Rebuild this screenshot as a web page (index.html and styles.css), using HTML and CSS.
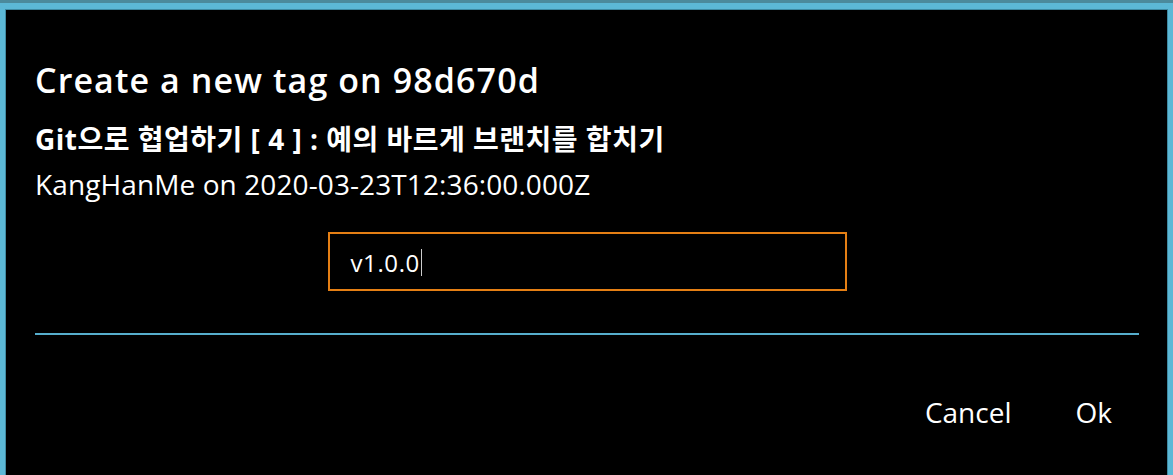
FILE: index.html
```html
<!DOCTYPE html>
<html lang="ko">
<head>
<meta charset="utf-8">
<title>Create a new tag</title>
<link rel="stylesheet" href="styles.css">
</head>
<body>
<div class="topbar"></div>
<div class="frame">
  <div class="dialog">
    <h1 class="title">Create a new tag on 98d670d</h1>
    <div class="commit-msg">Git으로 협업하기 [ 4 ] : 예의 바르게 브랜치를 합치기</div>
    <div class="commit-meta">KangHanMe on 2020-03-23T12:36:00.000Z</div>
    <div class="field-row">
      <div class="field"><span class="value">v1.0.0</span><span class="caret"></span></div>
    </div>
    <hr class="divider">
    <div class="actions">
      <button class="btn">Cancel</button>
      <button class="btn">Ok</button>
    </div>
  </div>
</div>
</body>
</html>
```

FILE: styles.css
```css
html, body {
  margin: 0;
  padding: 0;
  height: 100%;
  overflow: hidden;
}
body {
  background: #5cb8d6;
  font-family: "Open Sans", "Noto Sans CJK KR", sans-serif;
  color: #ffffff;
  display: flex;
  flex-direction: column;
}
.topbar {
  height: 3px;
  flex: none;
  background: #4b8a9c;
}
.frame {
  flex: 1;
  min-height: 0;
  padding: 6px 5px 0 5px;
  box-sizing: border-box;
  display: flex;
  flex-direction: column;
}
.dialog {
  flex: 1;
  min-height: 0;
  background: #000;
  border: 1px solid #3f8aa2;
  border-bottom: 0;
  padding: 0 28px 0 29px;
  box-sizing: border-box;
  display: flex;
  flex-direction: column;
}
.title {
  margin: 50px 0 0 0;
  font-size: 34px;
  font-weight: 600;
  line-height: 40px;
  letter-spacing: 1.1px;
}
.commit-msg {
  margin-top: 21px;
  font-size: 28px;
  font-weight: 700;
  line-height: 36px;
  letter-spacing: 0.5px;
}
.commit-meta {
  margin-top: 9px;
  font-size: 28px;
  line-height: 36px;
  letter-spacing: 0.1px;
}
.field-row {
  display: flex;
  justify-content: center;
  margin-top: 30px;
}
.field {
  width: 519px;
  height: 59px;
  box-sizing: border-box;
  border: 2px solid #e57f14;
  display: flex;
  align-items: center;
  padding: 2px 0 0 21px;
  font-size: 24px;
  letter-spacing: 0.6px;
}
.caret {
  width: 1px;
  height: 27px;
  background: #cccccc;
  margin-left: 1px;
}
.divider {
  margin: 42px 0 0 0;
  border: 0;
  height: 2px;
  flex: none;
  background: #56aecd;
}
.actions {
  display: flex;
  justify-content: flex-end;
  gap: 64px;
  margin-top: 59px;
  padding-right: 27px;
}
.btn {
  background: none;
  border: 0;
  padding: 0;
  color: #ffffff;
  font-family: "Open Sans", sans-serif;
  font-size: 28px;
  line-height: 36px;
}
```
